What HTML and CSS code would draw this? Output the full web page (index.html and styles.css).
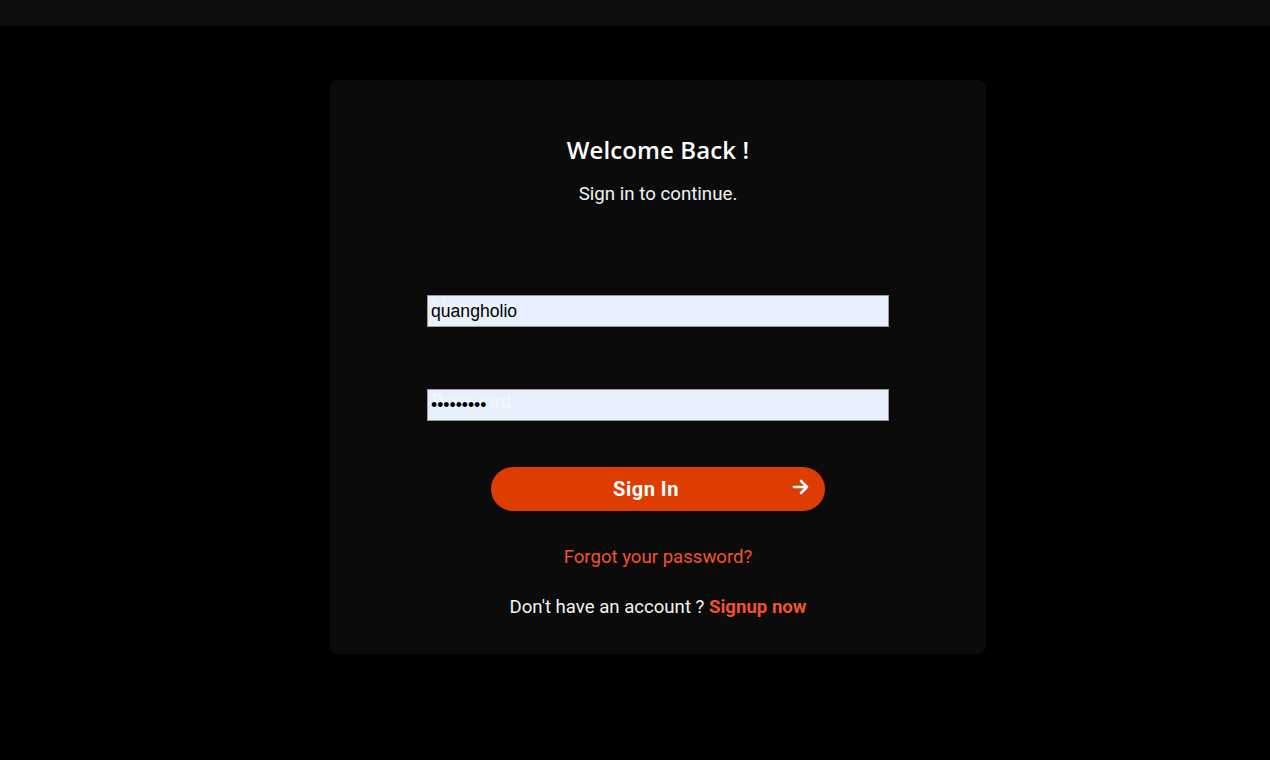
FILE: index.html
```html
<!DOCTYPE html>
<html>
<head>
    <meta charset="UTF-8">
    <title>Sign In</title>
    <link rel="stylesheet" href="styles.css">
</head>
<body>
    <div class="topbar"></div>
    <div class="page">
        <div class="card">
            <h1>Welcome Back !</h1>
            <p class="sub">Sign in to continue.</p>

            <div class="field first">
                <span class="ghost">Username</span>
                <input type="text" value="quangholio">
            </div>
            <div class="field">
                <span class="ghost">Password</span>
                <input type="password" value="password1">
            </div>

            <button class="signin">
                Sign In
                <svg class="arrow" width="18" height="18" viewBox="0 0 18 18">
                    <path d="M2 9h13M9 3l6 6-6 6" fill="none" stroke="#fff" stroke-width="2.6" stroke-linecap="round" stroke-linejoin="round"/>
                </svg>
            </button>

            <a class="forgot" href="#">Forgot your password?</a>
            <p class="signup">Don't have an account ? <a href="#">Signup now</a></p>
        </div>
    </div>
</body>
</html>
```

FILE: styles.css
```css
body {
    margin: 0;
    background: #000;
    font-family: Roboto, "Liberation Sans", sans-serif;
    color: #fff;
}
.topbar {
    height: 26px;
    background: #0c0c0c;
}
.page {
    display: flex;
    justify-content: center;
    padding-top: 54px;
    padding-left: 46px;
}
.card {
    width: 656px;
    height: 574px;
    box-sizing: border-box;
    background: #0b0b0b;
    border-radius: 8px;
    display: flex;
    flex-direction: column;
    align-items: center;
    padding-top: 54px;
}
h1 {
    margin: 0;
    font-family: "Open Sans", sans-serif;
    font-weight: 600;
    font-size: 24px;
    line-height: 32px;
    letter-spacing: 0.1px;
}
.sub {
    margin: 16px 0 0;
    font-size: 18.7px;
    line-height: 24px;
    color: #f2f2f2;
}
.field {
    position: relative;
    width: 462px;
    height: 32px;
    margin-top: 62px;
    background: #e8f0fe;
}
.field.first { margin-top: 89px; }
.field input {
    position: relative;
    display: block;
    width: 100%;
    height: 32px;
    box-sizing: border-box;
    margin: 0;
    padding: 0 3px;
    border: 1px solid #9a9a9a;
    background: transparent;
    font-family: "Liberation Sans", Arial, sans-serif;
    font-size: 17.6px;
    color: #000;
}
.ghost {
    position: absolute;
    left: 4px;
    top: 2px;
    font-family: "Liberation Serif", serif;
    font-size: 21px;
    line-height: 21px;
    color: #f3f6fd;
    pointer-events: none;
}
.signin {
    position: relative;
    margin-top: 46px;
    width: 334px;
    height: 44px;
    padding: 0 24px 0 0;
    border: none;
    border-radius: 22px;
    background: #dd3d00;
    color: #fff;
    font-family: Roboto, sans-serif;
    font-weight: 700;
    font-size: 20px;
    letter-spacing: 0.5px;
    cursor: pointer;
}
.arrow {
    position: absolute;
    right: 15px;
    top: 11px;
}
.forgot {
    margin-top: 34px;
    font-size: 18.6px;
    line-height: 24px;
    color: #f2522e;
    text-decoration: none;
}
.signup {
    margin: 26px 0 0;
    font-size: 18.6px;
    line-height: 24px;
    color: #f2f2f2;
}
.signup a {
    color: #f2522e;
    font-weight: 700;
    text-decoration: none;
}
```
